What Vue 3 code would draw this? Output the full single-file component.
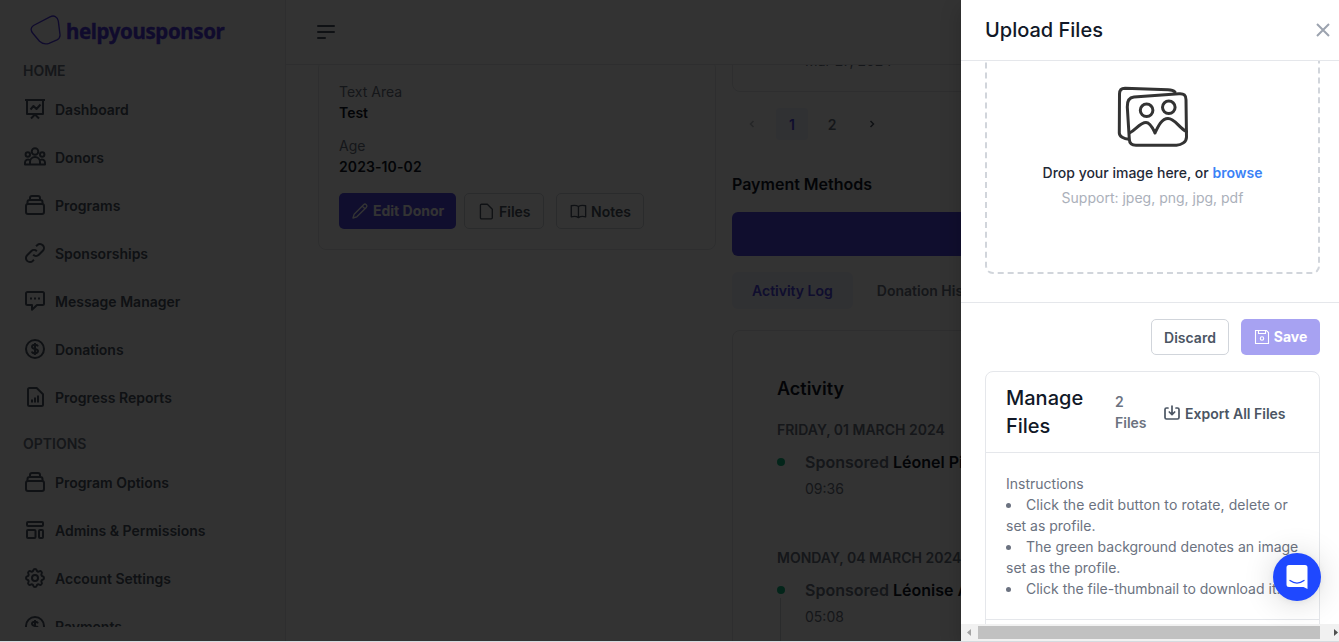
<script setup>
const icons = {
  board: '<path d="M2 3h20M4 3.500V17h16V3.500M8 21.500l4-4 4 4M7.500 12.500l3-3.500 3 3L17.500 7.500"/>',
  users: '<circle cx="12" cy="6.500" r="3.300"/><circle cx="4.800" cy="9.500" r="2.200"/><circle cx="19.200" cy="9.500" r="2.200"/><path d="M7 19.500V17a5 5 0 0 1 10 0v2.500zM7 19.500H2V17.500a3 3 0 0 1 4.500-2.500M17 19.500h5V17.500a3 3 0 0 0-4.500-2.500"/>',
  stack: '<rect x="3" y="11" width="18" height="10" rx="2"/><path d="M4.500 11V9a2 2 0 0 1 2-2h11a2 2 0 0 1 2 2v2M7 7V5a2 2 0 0 1 2-2h6a2 2 0 0 1 2 2v2"/>',
  link: '<path d="M13.828 10.172a4 4 0 0 0-5.656 0l-4 4a4 4 0 1 0 5.656 5.656l1.102-1.101m-.758-4.899a4 4 0 0 0 5.656 0l4-4a4 4 0 0 0-5.656-5.656l-1.100 1.100"/>',
  message: '<path d="M4.500 3h15A1.500 1.500 0 0 1 21 4.500v10a1.500 1.500 0 0 1-1.500 1.500H14l-5 4.700V16H4.500A1.500 1.500 0 0 1 3 14.500v-10A1.500 1.500 0 0 1 4.500 3z"/><path d="M7 9.500h2M11 9.500h2M15 9.500h2"/>',
  dollar: '<circle cx="12" cy="12" r="9"/><path d="M15 9.300C14.600 8.300 13.500 7.800 12 7.800c-1.800 0-3 .8-3 2 0 3 6 1.300 6 4.300 0 1.300-1.300 2.100-3 2.100s-2.900-.7-3.200-1.800M12 6v12"/>',
  report: '<path d="M6.500 3h7.200L20 9.200v10.300a1.500 1.500 0 0 1-1.500 1.500h-12A1.500 1.500 0 0 1 5 19.500v-15A1.500 1.500 0 0 1 6.500 3z"/><path d="M9 17.500v-3M12 17.500v-5M15 17.500v-7"/>',
  layout: '<rect x="4" y="4" width="16" height="4" rx="1"/><rect x="4" y="12" width="8.500" height="8" rx="1"/><rect x="16" y="12" width="4" height="8" rx="1"/>',
  gear: '<path d="M10.325 4.317c.426-1.756 2.924-1.756 3.350 0a1.724 1.724 0 0 0 2.573 1.066c1.543-.94 3.310.826 2.370 2.370a1.724 1.724 0 0 0 1.065 2.572c1.756.426 1.756 2.924 0 3.350a1.724 1.724 0 0 0-1.066 2.573c.94 1.543-.826 3.310-2.370 2.370a1.724 1.724 0 0 0-2.572 1.065c-.426 1.756-2.924 1.756-3.350 0a1.724 1.724 0 0 0-2.573-1.066c-1.543.94-3.310-.826-2.370-2.370a1.724 1.724 0 0 0-1.065-2.572c-1.756-.426-1.756-2.924 0-3.350a1.724 1.724 0 0 0 1.066-2.573c-.94-1.543.826-3.310 2.370-2.370.996.608 2.296.07 2.572-1.065z"/><circle cx="12" cy="12" r="3"/>'
}
const home = [
  ['board', 'Dashboard'], ['users', 'Donors'], ['stack', 'Programs'], ['link', 'Sponsorships'],
  ['message', 'Message Manager'], ['dollar', 'Donations'], ['report', 'Progress Reports']
]
const options = [
  ['stack', 'Program Options'], ['layout', 'Admins & Permissions'], ['gear', 'Account Settings'], ['dollar', 'Payments']
]
const log = [
  { day: 'Friday, 01 March 2024', name: 'Léonel Pierre', time: '09:36', line: false },
  { day: 'Monday, 04 March 2024', name: 'Léonise Antoine', time: '05:08', line: true }
]
</script>

<template>
  <div class="app">
    <aside class="side">
      <div class="logo">
        <svg width="32" height="31" viewBox="0 0 32 31" fill="none" stroke="#4f38e0" stroke-width="1.400"><path d="M3.500 10.500 20 1.800C24 0 27.500 1.500 28.300 6l1.700 13.500c.3 2.500-.7 4.200-3 5.300l-8 3.500c-3.500 1.200-6.800.5-9.500-2L3 18.500C.5 15.800.3 12.500 3.500 10.500z"/></svg>
        <span>helpyousponsor</span>
      </div>
      <nav>
        <h6>HOME</h6>
        <a v-for="n in home" :key="n[1]" class="item"><svg class="ic" viewBox="0 0 24 24" v-html="icons[n[0]]"></svg>{{ n[1] }}</a>
        <h6 class="second">OPTIONS</h6>
        <a v-for="n in options" :key="n[1]" class="item"><svg class="ic" viewBox="0 0 24 24" v-html="icons[n[0]]"></svg>{{ n[1] }}</a>
      </nav>
    </aside>

    <main class="main">
      <header class="top">
        <svg width="20" height="16" viewBox="0 0 20 16" fill="none" stroke="#4b5563" stroke-width="2" stroke-linecap="round"><path d="M2 2h16M2 8h16M2 14h7"/></svg>
      </header>
      <div class="body">
        <section class="donor">
          <p class="lab">Text Area</p>
          <p class="val">Test</p>
          <p class="lab gap">Age</p>
          <p class="val date">2023-10-02</p>
          <div class="btns">
            <button class="btn primary edit"><svg class="bi" viewBox="0 0 20 20"><path d="M3.500 13.500 14 3a2 2 0 0 1 3 3L6.500 16.500l-4.300 1.300zM12.500 4.500l3 3"/></svg>Edit Donor</button>
            <button class="btn files"><svg class="bi" viewBox="0 0 20 20"><path d="M5 2.500h6.500L17 8v9.500a1.200 1.200 0 0 1-1.200 1.200H5a1.200 1.200 0 0 1-1.200-1.200V3.700A1.200 1.200 0 0 1 5 2.500z"/></svg>Files</button>
            <button class="btn notes"><svg class="bi" viewBox="0 0 20 20"><path d="M10.500 5C8.500 3.700 5.500 3.500 2.500 4.200v12.300c3-.8 6-.5 8 .8 2-1.300 5-1.600 8-.8V4.200c-3-.7-6-.5-8 .8v12"/></svg>Notes</button>
          </div>
        </section>
        <section class="right">
          <div class="table"><span>Mar 27, 2024</span></div>
          <div class="pages">
            <span class="pg off"><svg width="8" height="10" viewBox="0 0 8 10"><path d="M5.500 2 2.500 5l3 3"/></svg></span>
            <span class="pg on">1</span><span class="pg">2</span>
            <span class="pg"><svg width="8" height="10" viewBox="0 0 8 10"><path d="m2.500 2 3 3-3 3"/></svg></span>
          </div>
          <h5>Payment Methods</h5>
          <div class="pay"></div>
          <div class="tabs"><span class="tab on">Activity Log</span><span class="tab">Donation History</span></div>
          <div class="act">
            <h4>Activity</h4>
            <div v-for="e in log" :key="e.day" class="entry">
              <p class="day">{{ e.day }}</p>
              <div class="row">
                <div class="rail"><i class="dot"></i><i v-if="e.line" class="line"></i></div>
                <div><p class="who">Sponsored <b>{{ e.name }}</b></p><p class="time">{{ e.time }}</p></div>
              </div>
            </div>
          </div>
        </section>
      </div>
    </main>

    <div class="shade"></div>

    <aside class="drawer">
      <header class="dh">
        <h3>Upload Files</h3>
        <svg width="14" height="14" viewBox="0 0 14 14" fill="none" stroke="#9ca3af" stroke-width="2"><path d="M1 1l12 12M13 1 1 13"/></svg>
      </header>
      <div class="dropwrap">
        <div class="drop">
          <svg width="72" height="62" viewBox="0 0 72 62" fill="none" stroke="#333" stroke-width="3" stroke-linejoin="round" stroke-linecap="round">
            <path d="M58 6C56 4 54 3.800 51 3.700L8 2.300C4 2.300 2.500 4.300 2.500 8L2.300 47c0 3.500 4.500 6 9.500 6.200"/>
            <path d="M17 11 62 7.800c5-.4 7 1.500 7 6L69.500 51c0 5-5 8-10 8.200H19c-4 0-6.500-1.700-6.700-6L10.300 21c-.3-6.500 2-9.500 6.700-10z"/>
            <path d="M12.500 47c6-3 10.500-10.500 16.500-10.500 4.500 0 7 6.500 9 10.500 3-6.500 6.500-14.500 13-14.500 7 0 11 9.500 18.500 13"/>
            <circle cx="29.600" cy="24.300" r="6.300"/><circle cx="51.800" cy="21.300" r="6.300"/>
          </svg>
          <p class="d1">Drop your image here, or <span>browse</span></p>
          <p class="d2">Support: jpeg, png, jpg, pdf</p>
        </div>
      </div>
      <div class="df">
        <button class="btn discard">Discard</button>
        <button class="btn save"><svg width="16" height="16" viewBox="0 0 16 16" fill="none" stroke="#fff" stroke-width="1.100"><path d="M1.500 1.500h11l2 2v11h-13zM4.500 1.500v3h7v-3"/><circle cx="8" cy="9.500" r="1.700"/></svg>Save</button>
      </div>
      <section class="manage">
        <div class="mh">
          <h3>Manage Files</h3>
          <span class="count">2 Files</span>
          <span class="export"><svg width="16" height="16" viewBox="0 0 16 16" fill="none" stroke="#4b5563" stroke-width="1.700" stroke-linecap="round" stroke-linejoin="round"><path d="M4 3H2.500Q1 3 1 4.500v8Q1 14 2.500 14h11q1.500 0 1.500-1.500v-8Q15 3 13.500 3H12M8 1v8.500M5.300 7 8 9.700 10.700 7"/></svg>Export All Files</span>
        </div>
        <div class="mb">
          <p>Instructions</p>
          <ul>
            <li><span class="loose">Click the edit button to rotate, delete or</span> set as profile.</li>
            <li>The green background denotes an image set as the profile.</li>
            <li>Click the file-thumbnail to download it.</li>
          </ul>
        </div>
      </section>
      <div class="sb">
        <svg width="17" height="17" viewBox="0 0 17 17"><path d="M10 5v7L6 8.500z" fill="#a3a3a3"/></svg>
        <i></i>
        <svg class="ra" width="17" height="17" viewBox="0 0 17 17"><path d="M13 5v7l4-3.500z" fill="#505050"/></svg>
      </div>
    </aside>
    <div class="chat">
      <svg width="24" height="26" viewBox="0 0 24 26"><path d="M4 1h16a2.500 2.500 0 0 1 2.500 2.500V25l-4-2H4a2.500 2.500 0 0 1-2.500-2.500v-17A2.500 2.500 0 0 1 4 1z" fill="#fff"/><path d="M5 16.500c4.500 3.300 9.500 3.300 14 0" fill="none" stroke="#1f48ff" stroke-width="1.300" stroke-linecap="round"/></svg>
    </div>
    <div class="edge"></div>
  </div>
</template>

<style>
body { margin: 0; overflow: hidden; }
</style>
<style scoped>
* { box-sizing: border-box; }
p, h3, h4, h5, h6, ul { margin: 0; padding: 0; }
.app { position: relative; width: 1339px; height: 642px; display: flex; overflow: hidden; background: #fff; font: 400 14px/21px Inter, "Liberation Sans", sans-serif; color: #6b7280; }
.side { width: 286px; height: 642px; flex: none; overflow: hidden; border-right: 1px solid #e5e7eb; background: #fafafa; }
nav { height: 567px; overflow: hidden; }
.logo { height: 60px; padding: 15px 0 0 30px; display: flex; }
.logo span { font: 700 20.500px/30px "Noto Sans", sans-serif; color: #4f38e0; margin: 1px 0 0 4px; letter-spacing: -.38px; -webkit-text-stroke: .4px #4f38e0; }
h6 { font-size: 14px; line-height: 21px; font-weight: 600; color: #6b7280; padding-left: 23px; margin-bottom: 8px; }
h6.second { margin: 16px 0 8px; }
.item { height: 40px; margin-bottom: 8px; padding-left: 23px; display: flex; align-items: center; font-weight: 600; color: #4b5563; }
.ic { width: 24px; height: 24px; margin-right: 8px; fill: none; stroke: #4b5563; stroke-width: 2; stroke-linejoin: round; }
.main { flex: 1; min-width: 0; height: 641px; overflow: hidden; display: flex; flex-direction: column; }
.top { height: 65px; flex: none; border-bottom: 1px solid #e5e7eb; padding: 24px 0 0 30px; }
.body { flex: 1; min-height: 0; overflow: hidden; display: flex; padding-left: 32px; gap: 16px; align-items: flex-start; }
.donor { width: 398px; flex: none; margin-top: -5px; height: 190px; padding: 20px; border: 1px solid #e5e7eb; border-radius: 8px; }
.val { font-weight: 600; color: #111827; }
.date { letter-spacing: .1px; }
.gap { margin-top: 12px; }
.btns { display: flex; margin-top: 16px; }
.btn { font: 600 14px/21px Inter, sans-serif; height: 36px; border: 1px solid #d1d5db; border-radius: 5px; background: #fff; color: #4b5563; display: flex; align-items: center; padding: 0; }
.bi { width: 18px; height: 18px; fill: none; stroke: currentColor; stroke-width: 1.5; stroke-linejoin: round; }
.edit { width: 117px; padding: 0 0 1px 12px; gap: 4px; background: #4f46e5; border: 0; color: #fff; font-weight: 700; }
.files { width: 80px; margin-left: 8px; padding-left: 12px; gap: 4px; }
.notes { width: 88px; margin-left: 12px; padding-left: 12px; gap: 4px; }
.right { width: 591px; flex: none; }
.table { height: 37px; margin-top: -10px; border: 1px solid #e5e7eb; border-radius: 8px; padding-left: 72px; }
.table span { display: block; line-height: 21px; margin-top: -6px; }
.pages { display: flex; gap: 8px; margin: 16px 0 0 4px; }
.pg { width: 32px; height: 32px; border-radius: 4px; display: flex; align-items: center; justify-content: center; font-weight: 600; }
.pg svg { fill: none; stroke: #4b5563; stroke-width: 1.5; }
.pg.off { opacity: .4; }
.on { background: #eef2ff; color: #4f46e5; }
h5 { font-size: 16px; line-height: 24px; font-weight: 600; color: #111827; margin-top: 32px; }
.pay { height: 44px; margin-top: 16px; border-radius: 6px; background: #4f46e5; }
.tabs { display: flex; margin-top: 16px; gap: 4px; }
.tab { height: 37px; line-height: 38px; padding: 0 20px; border-radius: 6px; font-weight: 600; }
.act { margin-top: 21px; height: 500px; border: 1px solid #e5e7eb; border-radius: 8px; padding: 44px; }
h4 { font-size: 18px; line-height: 28px; font-weight: 600; color: #111827; }
.entry { height: 128px; padding-top: 16px; }
.day { font-weight: 600; text-transform: uppercase; }
.row { display: flex; margin-top: 10px; }
.rail { width: 28px; height: 80px; display: flex; flex-direction: column; }
.dot { width: 8px; height: 8px; border-radius: 50%; background: #10b981; margin-top: 8px; flex: none; }
.line { width: 1px; height: 70px; flex: none; margin: 4px 0 0 3px; background: #d1d5db; }
.who { font-size: 16px; line-height: 24px; font-weight: 600; white-space: nowrap; }
.who b { font-weight: 600; color: #111827; }
.time { margin-top: 4px; }
.shade { position: absolute; inset: 0 0 1px; background: rgba(0, 0, 0, .8); }
.drawer { position: absolute; top: 0; right: 0; width: 378px; height: 641px; overflow: hidden; background: #fff; display: flex; flex-direction: column; box-shadow: 0 8px 20px rgba(0, 0, 0, .2); }
.dh { height: 61px; flex: none; border-bottom: 1px solid #e5e7eb; padding: 0 9px 0 24px; display: flex; align-items: center; justify-content: space-between; }
h3 { font-size: 20px; line-height: 28px; font-weight: 500; color: #111827; }
.dropwrap { height: 241px; flex: none; padding: 0 19px 0 24px; overflow: hidden; }
.drop { height: 243px; margin-top: -30px; border: 2px dashed #d1d5db; border-radius: 8px; display: flex; flex-direction: column; align-items: center; padding-top: 53px; }
.d1 { margin-top: 14px; font-weight: 500; color: #1f2937; }
.d1 span { color: #3b82f6; font-weight: 600; }
.d2 { margin-top: 4px; color: #9ca3af; opacity: .85; }
.df { border-top: 1px solid #e5e7eb; padding: 16px 19px 16px 0; display: flex; justify-content: flex-end; gap: 12px; flex: none; }
.discard { width: 78px; justify-content: center; }
.save { width: 79px; justify-content: center; gap: 4px; padding-bottom: 1px; background: #a7a2f2; border: 0; color: #fff; font-weight: 700; }
.manage { margin: 0 19px 0 24px; height: 300px; flex: none; border: 1px solid #e5e7eb; border-radius: 8px; }
.mh { height: 81px; border-bottom: 1px solid #e5e7eb; padding-left: 20px; display: flex; align-items: center; }
.mh h3 { width: 109px; padding-right: 20px; }
.count { width: 32px; font-weight: 600; font-size: 14px; }
.export { margin-left: 17px; padding-top: 2px; display: flex; gap: 5px; align-items: center; font-weight: 600; color: #4b5563; white-space: nowrap; }
.mb { height: 167px; padding: 20px 20px 0; border-bottom: 1px solid #e5e7eb; }
ul { list-style: disc inside; }
.loose { letter-spacing: .09px; }
.sb { position: absolute; left: 0; right: 0; bottom: 0; height: 17px; background: #f1f1f1; display: flex; align-items: center; }
.sb svg { flex: none; }
.sb i { width: 342px; height: 13px; background: #c1c1c1; flex: none; }
.ra { margin-left: 1px; }
.chat { position: absolute; left: 1273px; top: 553px; width: 48px; height: 48px; border-radius: 50%; background: #1f48ff; display: flex; align-items: center; justify-content: center; box-shadow: 0 1px 6px rgba(0, 0, 0, .06), 0 2px 32px rgba(0, 0, 0, .16); }
.edge { position: absolute; left: 0; right: 0; bottom: 0; height: 1px; background: #d5dbe0; }
</style>
